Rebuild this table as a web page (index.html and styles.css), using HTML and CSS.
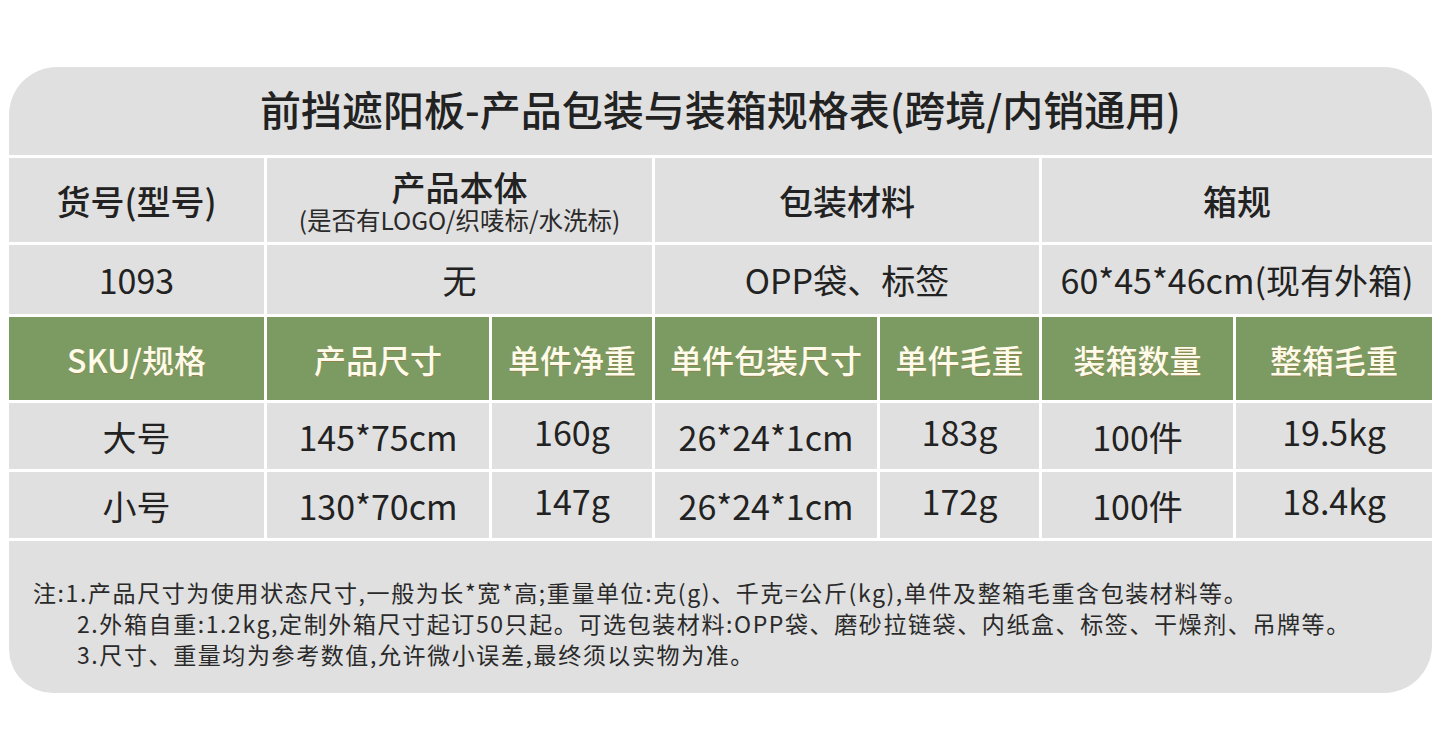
FILE: index.html
```html
<!DOCTYPE html>
<html lang="zh-CN">
<head>
<meta charset="utf-8">
<title>前挡遮阳板-产品包装与装箱规格表</title>
<link rel="stylesheet" href="styles.css">
</head>
<body>
<div class="sheet">
  <div class="cell title span7">前挡遮阳板-产品包装与装箱规格表(跨境/内销通用)</div>

  <div class="cell head">货号(型号)</div>
  <div class="cell head stack span2">
    <div class="main">产品本体</div>
    <div class="sub">(是否有LOGO/织唛标/水洗标)</div>
  </div>
  <div class="cell head span2">包装材料</div>
  <div class="cell head span2">箱规</div>

  <div class="cell val">1093</div>
  <div class="cell val span2">无</div>
  <div class="cell val span2">OPP袋、标签</div>
  <div class="cell val span2">60*45*46cm(现有外箱)</div>

  <div class="cell green">SKU/规格</div>
  <div class="cell green">产品尺寸</div>
  <div class="cell green">单件净重</div>
  <div class="cell green">单件包装尺寸</div>
  <div class="cell green">单件毛重</div>
  <div class="cell green">装箱数量</div>
  <div class="cell green">整箱毛重</div>

  <div class="cell val">大号</div>
  <div class="cell val">145*75cm</div>
  <div class="cell val up">160g</div>
  <div class="cell val">26*24*1cm</div>
  <div class="cell val up">183g</div>
  <div class="cell val">100件</div>
  <div class="cell val up">19.5kg</div>

  <div class="cell val">小号</div>
  <div class="cell val">130*70cm</div>
  <div class="cell val up">147g</div>
  <div class="cell val">26*24*1cm</div>
  <div class="cell val up">172g</div>
  <div class="cell val">100件</div>
  <div class="cell val up">18.4kg</div>

  <div class="cell notes span7">
    <p class="note-line">注:1.产品尺寸为使用状态尺寸,一般为长*宽*高;重量单位:克(g)、千克=公斤(kg),单件及整箱毛重含包装材料等。</p>
    <p class="note-line indent">2.外箱自重:1.2kg,定制外箱尺寸起订50只起。可选包装材料:OPP袋、磨砂拉链袋、内纸盒、标签、干燥剂、吊牌等。</p>
    <p class="note-line indent">3.尺寸、重量均为参考数值,允许微小误差,最终须以实物为准。</p>
  </div>
</div>
</body>
</html>
```

FILE: styles.css
```css
html, body {
  margin: 0;
  padding: 0;
  background: #ffffff;
}

body {
  font-family: "Noto Sans CJK SC", "Noto Sans", sans-serif;
  color: #222222;
  padding: 67px 0 0 9px;
}

.sheet {
  width: 1423px;
  display: grid;
  grid-template-columns: 255px 222px 160px 222px 159px 191px 196px;
  grid-template-rows: 88px 84px 69px 83px 66px 66px 152px;
  gap: 3px;
  background: #ffffff;
  border-radius: 48px 48px 48px 44px;
  overflow: hidden;
}

.cell {
  background: #e0e0e0;
  display: flex;
  align-items: center;
  justify-content: center;
  text-align: center;
  white-space: nowrap;
  box-sizing: border-box;
}

.span2 { grid-column: span 2; }
.span7 { grid-column: span 7; }

.title {
  font-size: 41px;
  font-weight: 500;
  color: #222222;
  padding-bottom: 6px;
}

.head {
  font-size: 34px;
  font-weight: 500;
  color: #222222;
}

.stack {
  flex-direction: column;
}

.stack .main {
  font-size: 34px;
  line-height: 38px;
  font-weight: 500;
}

.stack .sub {
  font-size: 24.5px;
  line-height: 27px;
  font-weight: 400;
  color: #2a2a2a;
}

.val {
  font-size: 34px;
  font-weight: 400;
  color: #222222;
}

.val.up {
  padding-bottom: 10px;
}

.green {
  background: #7b9b62;
  color: #fffbea;
  font-size: 32px;
  font-weight: 500;
  text-shadow: 0 1px 0 rgba(160, 110, 60, 0.55);
}

.notes {
  display: block;
  text-align: left;
  padding: 36px 0 0 24px;
}

.note-line {
  margin: 0;
  font-size: 23px;
  line-height: 31px;
  letter-spacing: 1.6px;
  color: #2a2a2a;
  font-weight: 400;
}

.note-line.indent {
  padding-left: 44px;
}
```
